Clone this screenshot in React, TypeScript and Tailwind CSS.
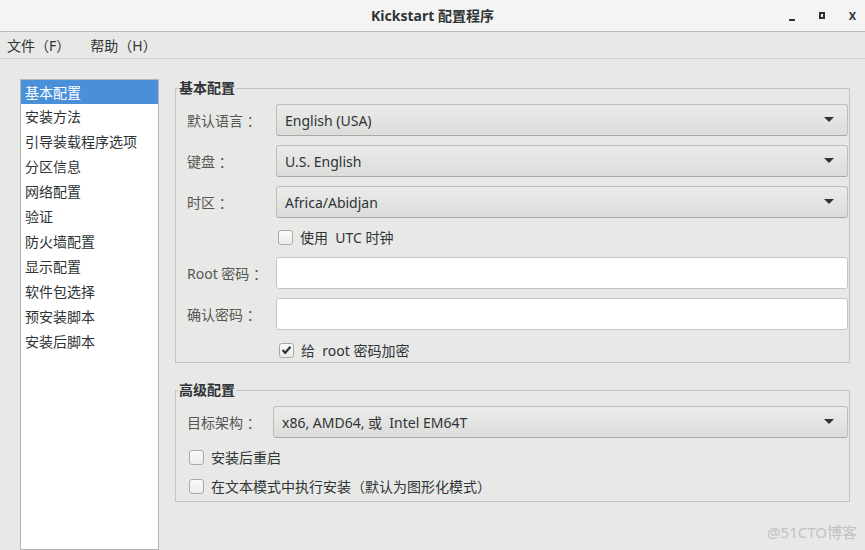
import React from "react";

const font = { fontFamily: '"Noto Sans", "Noto Sans CJK SC", sans-serif' };

const navItems = [
  "基本配置",
  "安装方法",
  "引导装载程序选项",
  "分区信息",
  "网络配置",
  "验证",
  "防火墙配置",
  "显示配置",
  "软件包选择",
  "预安装脚本",
  "安装后脚本",
];

function Dropdown({ value }: { value: string }) {
  return (
    <div className="flex h-[32px] items-center justify-between rounded-[3px] border border-[#bdbdba] border-b-[#a9a9a6] bg-gradient-to-b from-[#ebebea] to-[#dcdcdb] pl-[8px] pr-[13px] text-[14px] text-[#2e3436]">
      <span className="whitespace-pre">{value}</span>
      <svg width="10" height="6" viewBox="0 0 10 6">
        <path d="M0 0 L10 0 L5 5 Z" fill="#2e3436" />
      </svg>
    </div>
  );
}

function TextInput() {
  return <div className="h-[32px] rounded-[3px] border border-[#c5c5c2] bg-white" />;
}

function Check({ checked, label }: { checked?: boolean; label: string }) {
  return (
    <div className="flex h-[16px] items-center gap-[7px] text-[14px] text-[#2e3436]">
      <div className="flex h-[15px] w-[15px] items-center justify-center rounded-[3px] border border-[#aaaaa7] bg-gradient-to-b from-[#fafafa] to-[#ececeb]">
        {checked && (
          <svg width="11" height="10" viewBox="0 0 11 10">
            <path d="M1.5 5 L4.2 7.8 L9.5 1.8" stroke="#2e3436" strokeWidth="2.2" fill="none" />
          </svg>
        )}
      </div>
      <span className="whitespace-pre">{label}</span>
    </div>
  );
}

function Label({ children }: { children: React.ReactNode }) {
  return <div className="flex h-[32px] items-center whitespace-pre text-[14px] text-[#555753]">{children}</div>;
}

export default function App() {
  return (
    <div className="flex h-[550px] w-[865px] flex-col overflow-hidden bg-[#e8e8e7]" style={font}>
      {/* title bar */}
      <div className="relative flex h-[32px] shrink-0 items-center justify-center border-b border-[#b8b8b6] bg-[#f4f4f4]">
        <span className="text-[14px] font-bold text-[#2e3436]">Kickstart 配置程序</span>
        <div className="absolute right-[9px] top-0 flex h-full items-center gap-[24px]">
          <div className="mt-[9px] h-[2px] w-[6px] bg-[#2e3436]" />
          <div className="h-[7px] w-[6px] border-2 border-[#2e3436]" />
          <span className="text-[11px] font-bold leading-none text-[#2e3436]">X</span>
        </div>
      </div>

      {/* menu bar */}
      <div className="flex h-[27px] shrink-0 items-center gap-[20px] border-b border-[#d3d3d1] pl-[7px] text-[14px] text-[#2e3436]">
        <span>文件（F）</span>
        <span>帮助（H）</span>
      </div>

      {/* main */}
      <div className="flex flex-1 gap-[16px] pl-[20px] pt-[20px]">
        <div className="w-[139px] shrink-0 border border-[#b6b6b3] bg-white pb-[1px] text-[14px] text-[#2e3436]">
          {navItems.map((item, i) => (
            <div
              key={item}
              className={
                i === 0
                  ? "flex h-[24px] items-center bg-[#4a90d9] pl-[4px] text-white"
                  : "flex h-[25px] items-center pl-[4px]"
              }
            >
              {item}
            </div>
          ))}
        </div>

        <div className="flex w-[675px] flex-col gap-[18px]">
          <fieldset className="border border-[#c3c3c0] pb-[4px] pl-[11px] pr-[1px] pt-[7px]">
            <legend className="-ml-[9px] px-[1px] text-[14px] font-bold leading-[18px] text-[#2e3436]">基本配置</legend>
            <div className="grid grid-cols-[89px_1fr] gap-y-[9px]">
              <Label>默认语言 ：</Label>
              <Dropdown value="English (USA)" />
              <Label>键盘 ：</Label>
              <Dropdown value="U.S. English" />
              <Label>时区 ：</Label>
              <Dropdown value="Africa/Abidjan" />
              <div />
              <div className="pb-[3px] pl-[2px] pt-[2px]">
                <Check label="使用  UTC 时钟" />
              </div>
              <Label>Root 密码 ：</Label>
              <TextInput />
              <Label>确认密码 ：</Label>
              <TextInput />
              <div />
              <div className="pl-[3px] pt-[3px]">
                <Check checked label="给  root 密码加密" />
              </div>
            </div>
          </fieldset>

          <fieldset className="border border-[#c3c3c0] pb-[7px] pl-[11px] pr-[1px] pt-[7px]">
            <legend className="-ml-[9px] px-[1px] text-[14px] font-bold leading-[18px] text-[#2e3436]">高级配置</legend>
            <div className="flex flex-col">
              <div className="flex">
                <div className="w-[86px]">
                  <Label>目标架构 ：</Label>
                </div>
                <div className="flex-1">
                  <Dropdown value="x86, AMD64, 或  Intel EM64T" />
                </div>
              </div>
              <div className="mt-[11px] pl-[2px]">
                <Check label="安装后重启" />
              </div>
              <div className="mt-[13px] pl-[2px]">
                <Check label="在文本模式中执行安装（默认为图形化模式）" />
              </div>
            </div>
          </fieldset>

          <div className="-mr-[7px] mt-auto flex justify-end pb-[7px] text-[15px] text-[#c2c2c0]">@51CTO博客</div>
        </div>
      </div>
    </div>
  );
}
